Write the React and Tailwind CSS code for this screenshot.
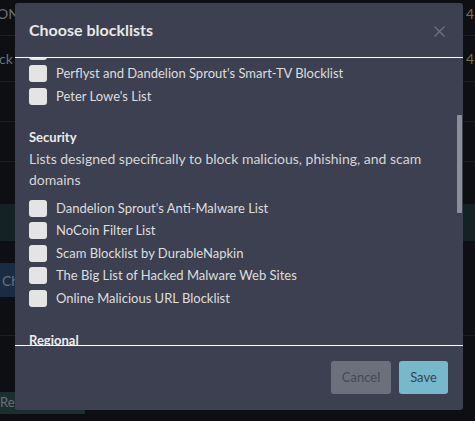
import React from "react";

function Row({ label }) {
  return (
    <div className="flex h-[22.5px] items-center gap-[9px]">
      <span className="h-[17px] w-[18px] shrink-0 rounded-[3px] bg-[#e4e4e4]" />
      {label ? <span className="text-[13px] leading-none text-[#dedede]">{label}</span> : null}
    </div>
  );
}

export default function App() {
  return (
    <div
      className="relative h-[421px] w-[475px] overflow-hidden bg-[#0e0f13] text-[#6d7077]"
      style={{ fontFamily: "Lato, 'Open Sans', sans-serif" }}
    >
      {/* background page */}
      <div className="flex flex-col">
        <div className="flex h-[36px] items-start justify-between border-b border-[#1c1e23] pt-[3px] text-[14px]">
          <span className="-ml-[3px]">ON</span>
          <span className="pr-[1px] text-[#7a7248]">4</span>
        </div>
        <div className="flex h-[46px] items-center justify-between border-b border-[#1c1e23] text-[14px]">
          <span className="-ml-[1px]">ck</span>
          <span className="pr-[1px] text-[#7a7248]">4</span>
        </div>
        <div className="h-[40px] border-b border-[#1c1e23]" />
        <div className="h-[40px] border-b border-[#1c1e23]" />
        <div className="h-[42px]" />
        <div className="h-[37px] bg-[#152225]" />
        <div className="h-[22px]" />
        <div className="flex h-[34px] w-[60px] items-center bg-[#1a2c44] pl-[2px] text-[14px]">Ch</div>
        <div className="h-[39px] border-b border-[#1c1e23]" />
        <div className="h-[56px]" />
        <div className="flex h-[22px] w-[85px] items-center bg-[#1b2f2e] text-[13px]">Rep</div>
      </div>

      {/* modal */}
      <div className="absolute left-[15px] top-[3px] flex h-[407px] w-[448px] flex-col rounded-[3px] bg-[#3c4050]">
        <div className="flex h-[55px] shrink-0 items-center justify-between border-b border-white pl-[14px] pr-[18px]">
          <h2 className="text-[16px] font-bold text-[#e8e8e8]">Choose blocklists</h2>
          <svg width="11" height="11" viewBox="0 0 11 11" className="mt-[2px] text-[#6f7383]">
            <path d="M0.5 0.5L10.5 10.5M10.5 0.5L0.5 10.5" stroke="currentColor" strokeWidth="1.2" />
          </svg>
        </div>

        <div className="relative h-[288px] shrink-0 overflow-hidden border-b border-white">
          <div className="-mt-[18px] px-[14px]">
            <Row />
            <Row label="Perflyst and Dandelion Sprout's Smart-TV Blocklist" />
            <Row label="Peter Lowe's List" />
            <h3 className="mt-[19.5px] h-[20px] text-[13px] font-bold leading-[20px] text-[#ececec]">Security</h3>
            <p className="mt-[1px] text-[14px] leading-[21px] text-[#d6d6d6]">
              Lists designed specifically to block malicious, phishing, and scam domains
            </p>
            <div className="mt-[7px]">
              <Row label="Dandelion Sprout's Anti-Malware List" />
              <Row label="NoCoin Filter List" />
              <Row label="Scam Blocklist by DurableNapkin" />
              <Row label="The Big List of Hacked Malware Web Sites" />
              <Row label="Online Malicious URL Blocklist" />
            </div>
            <h3 className="mt-[20px] h-[20px] text-[13px] font-bold leading-[20px] text-[#ececec]">Regional</h3>
          </div>
          <div className="absolute right-[1px] top-[57px] h-[98px] w-[5px] rounded-[1px] bg-[#8c8f99]" />
        </div>

        <div className="flex flex-1 items-start justify-end gap-[8px] pr-[15px] pt-[15px]">
          <button className="h-[33px] w-[60px] rounded-[3px] bg-[#6c707d] text-[13px] text-[#444857]">Cancel</button>
          <button className="h-[33px] w-[49px] rounded-[3px] bg-[#77b9cc] text-[13px] text-[#3a3f4f]">Save</button>
        </div>
      </div>
    </div>
  );
}
